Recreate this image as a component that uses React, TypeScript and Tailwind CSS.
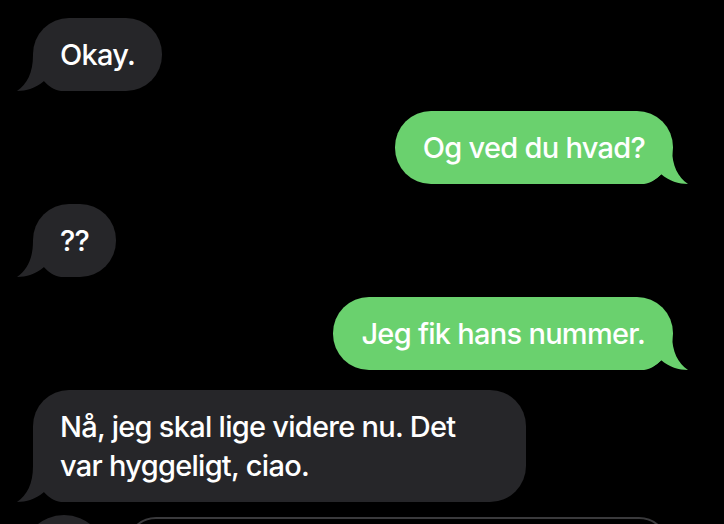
import React from "react";

const DARK = "#262629";
const GREEN = "#6ad16e";

function TailLeft() {
  return (
    <svg
      className="absolute bottom-0 left-[-16px]"
      width="60"
      height="36"
      viewBox="0 0 60 36"
    >
      <path
        d="M16 0 L60 0 L60 36 L44 36 C37 35 31 31 27 26 C19 33 9 36 0 36 C10 29 16 18 16 0 Z"
        fill={DARK}
      />
    </svg>
  );
}

function TailRight() {
  return (
    <svg
      className="absolute bottom-0 right-[-15px]"
      width="60"
      height="36"
      viewBox="0 0 60 36"
      style={{ transform: "scaleX(-1)" }}
    >
      <path
        d="M16 0 L60 0 L60 36 L44 36 C37 35 31 31 27 26 C19 33 9 36 0 36 C10 29 16 18 16 0 Z"
        fill={GREEN}
      />
    </svg>
  );
}

function Left({ children, className = "" }: { children: React.ReactNode; className?: string }) {
  return (
    <div className="flex justify-start">
      <div
        className={`relative rounded-[36px] bg-[#262629] px-[27px] py-[17px] text-white ${className}`}
      >
        <TailLeft />
        <span className="relative">{children}</span>
      </div>
    </div>
  );
}

function Right({ children }: { children: React.ReactNode }) {
  return (
    <div className="flex justify-end">
      <div className="relative rounded-[36px] bg-[#6ad16e] px-[28px] py-[17px] text-white">
        <TailRight />
        <span className="relative">{children}</span>
      </div>
    </div>
  );
}

export default function App() {
  return (
    <div
      className="w-[724px] h-[524px] overflow-hidden bg-black flex flex-col pl-[33px] pr-[51px] pt-[18px] gap-[20px] text-[29px] leading-[39px] tracking-[-0.025em] font-[450]"
      style={{ fontFamily: "Inter, 'Noto Sans', sans-serif" }}
    >
      <Left>Okay.</Left>
      <Right>Og ved du hvad?</Right>
      <Left>??</Left>
      <Right>Jeg fik hans nummer.</Right>
      <Left className="w-[493px]">
        Nå, jeg skal lige videre nu. Det
        <br />
        var hyggeligt, ciao.
      </Left>
      <div className="flex items-start gap-[20px] ml-[-11px] mt-[-7px] mr-[-47px]">
        <div className="h-[84px] w-[84px] shrink-0 rounded-full bg-[#262629]" />
        <div className="mt-[2px] h-[64px] w-[543px] shrink-0 rounded-[30px] border-2 border-[#3a3a3c]" />
      </div>
    </div>
  );
}
